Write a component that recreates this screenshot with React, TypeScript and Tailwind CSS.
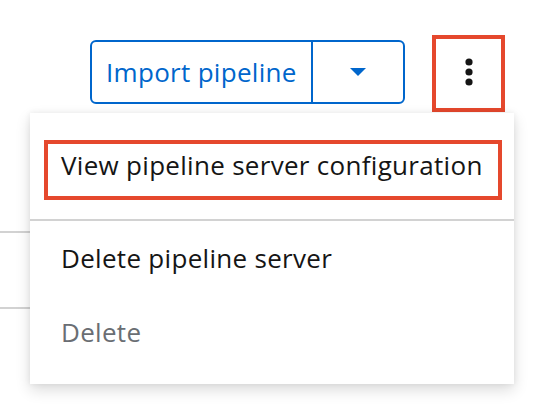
export default function App() {
  return (
    <div className="relative w-[538px] h-[412px] overflow-hidden bg-white text-[#151515] tracking-[0.3px]" style={{ fontFamily: '"Open Sans", "Noto Sans", sans-serif' }}>
      {/* toolbar */}
      <div className="flex items-start justify-end pt-[35px] pr-[33px] gap-[27px]">
        <div className="mt-[5px] flex h-[64px] rounded-[6px] border-2 border-[#0066cc] text-[#0066cc]">
          <button className="w-[219px] pl-[14px] text-left text-[26px] leading-[39px]">Import pipeline</button>
          <div className="w-[2px] bg-[#0066cc]" />
          <button className="flex w-[90px] items-center justify-center">
            <svg viewBox="0 0 16 8" className="h-[8px] w-[16px]" fill="currentColor"><path d="M0 0h16L8 8z" /></svg>
          </button>
        </div>
        <div className="flex h-[77px] w-[73px] items-center justify-center border-4 border-[#e5482d]">
          <svg viewBox="0 0 8 28" className="h-[28px] w-[8px] -mt-[3px]" fill="#151515">
            <circle cx="4" cy="4" r="3.6" />
            <circle cx="4" cy="14" r="3.6" />
            <circle cx="4" cy="24" r="3.6" />
          </svg>
        </div>
      </div>

      {/* table rows behind the menu */}
      <div className="mt-[119px] h-[2px] w-[120px] bg-[#d2d2d2]" />
      <div className="mt-[74px] h-[2px] w-[120px] bg-[#d2d2d2]" />

      {/* kebab menu */}
      <div className="absolute left-[30px] top-[113px] w-[484px] h-[271px] bg-white shadow-[0_6px_14px_rgba(3,3,3,0.14),0_0_6px_rgba(3,3,3,0.07)]">
        <div className="pt-[27px] pl-[14px] pr-[12px]">
          <div className="h-[60px] border-4 border-[#e5482d] pl-[13px] pt-[2px] text-[26px] leading-[39px]">
            View pipeline server configuration
          </div>
        </div>
        <div className="mt-[19px] h-[2px] bg-[#d2d2d2]" />
        <div className="pl-[31px] py-[17.5px] text-[26px] leading-[39px]">Delete pipeline server</div>
        <div className="pl-[31px] py-[17.5px] text-[26px] leading-[39px] text-[#6a6e73]">Delete</div>
      </div>
    </div>
  )
}
